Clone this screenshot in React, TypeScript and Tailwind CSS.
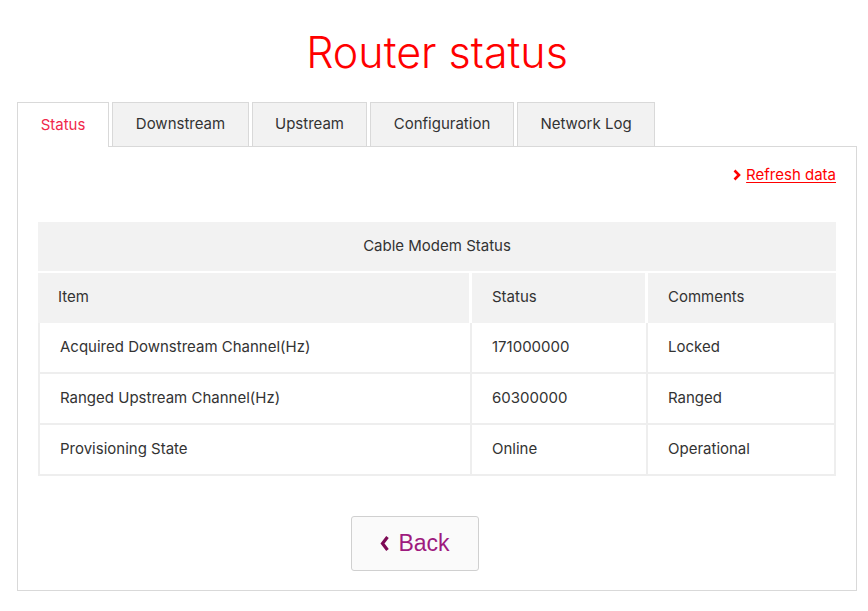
import React, { useState } from "react";

const tabs = [
  { id: "status", label: "Status", w: "w-[92px]" },
  { id: "downstream", label: "Downstream", w: "w-[137px]" },
  { id: "upstream", label: "Upstream", w: "w-[115px]" },
  { id: "configuration", label: "Configuration", w: "w-[144px]" },
  { id: "log", label: "Network Log", w: "w-[138px]" },
];

const rows = [
  ["Acquired Downstream Channel(Hz)", "171000000", "Locked"],
  ["Ranged Upstream Channel(Hz)", "60300000", "Ranged"],
  ["Provisioning State", "Online", "Operational"],
];

export default function App() {
  const [activeTab, setActiveTab] = useState("status");

  return (
    <div
      className="min-h-[611px] bg-white text-[#333] pb-5"
      style={{ fontFamily: "Inter, 'Open Sans', sans-serif" }}
    >
      <div className="ml-[17px] w-[840px]">
        {/* Title */}
        <h1 className="pt-[24px] h-[102px] text-center text-[43px] leading-[56px] font-light text-[#ff0000]">
          Router status
        </h1>

        {/* Tabs */}
        <ul className="flex gap-[3px] h-[45px]">
          {tabs.map((t) =>
            t.id === activeTab ? (
              <li
                key={t.id}
                onClick={() => setActiveTab(t.id)}
                className={`${t.w} h-[45px] relative z-10 bg-white border border-b-0 border-[#d9d9d9] flex items-center justify-center text-[15px] text-[#f0284a] cursor-pointer`}
              >
                {t.label}
              </li>
            ) : (
              <li
                key={t.id}
                onClick={() => setActiveTab(t.id)}
                className={`${t.w} h-[45px] bg-[#f2f2f2] border border-[#d9d9d9] flex items-center justify-center text-[15px] cursor-pointer`}
              >
                {t.label}
              </li>
            )
          )}
        </ul>

        {/* Panel */}
        <div className="-mt-px border border-[#d9d9d9] px-[20px] pt-[17px] pb-[19px]">
          <div className="flex justify-end">
            <a
              href="#"
              className="flex items-center gap-[5px] text-[15px] text-[#ff0000]"
            >
              <svg width="8" height="12" viewBox="0 0 8 12">
                <path
                  d="M1.5 1.5 L6 6 L1.5 10.5"
                  fill="none"
                  stroke="#ff0000"
                  strokeWidth="2.6"
                />
              </svg>
              <span className="underline underline-offset-2">Refresh data</span>
            </a>
          </div>

          {/* Cable Modem Status table */}
          <div className="mt-[35px] w-[798px] text-[15px]">
            <div className="h-[49px] bg-[#f2f2f2] flex items-center justify-center">
              Cable Modem Status
            </div>
            <div className="mt-[2px] flex gap-[3px] h-[50px]">
              <div className="w-[431px] bg-[#f2f2f2] flex items-center px-5">Item</div>
              <div className="w-[173px] bg-[#f2f2f2] flex items-center px-5">Status</div>
              <div className="w-[188px] bg-[#f2f2f2] flex items-center px-5">Comments</div>
            </div>
            <div className="bg-[#eeeeee] px-[2px] pb-[2px] flex flex-col gap-[2px]">
              {rows.map((r, i) => (
                <div key={i} className="flex gap-[2px] h-[49px]">
                  <div className="w-[430px] bg-white flex items-center px-5">{r[0]}</div>
                  <div className="w-[174px] bg-white flex items-center px-5">{r[1]}</div>
                  <div className="w-[186px] bg-white flex items-center px-5">{r[2]}</div>
                </div>
              ))}
            </div>
          </div>

          {/* Back */}
          <button
            className="mt-[40px] ml-[313px] w-[128px] h-[55px] rounded-[3px] border border-[#d0d0d0] bg-[#fafafa] flex items-center justify-center gap-[8px] text-[23px] text-[#9e1a7e]"
            style={{ fontFamily: "'Liberation Sans', Arial, sans-serif" }}
          >
            <svg width="10" height="17" viewBox="0 0 10 17">
              <path
                d="M7.5 2 L2.5 8.5 L7.5 15"
                fill="none"
                stroke="#7d0a55"
                strokeWidth="3.2"
              />
            </svg>
            Back
          </button>
        </div>
      </div>
    </div>
  );
}
